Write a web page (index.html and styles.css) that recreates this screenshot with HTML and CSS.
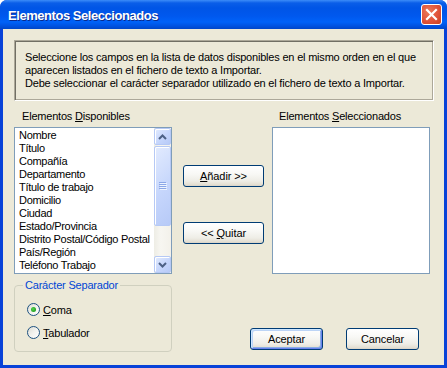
FILE: index.html
```html
<!DOCTYPE html>
<html lang="es">
<head>
<meta charset="utf-8">
<title>Elementos Seleccionados</title>
<link rel="stylesheet" href="styles.css">
</head>
<body>
<div class="window">
  <div class="titlebar">
    <span class="title">Elementos Seleccionados</span>
    <span class="close" aria-label="Cerrar">
      <svg width="21" height="21" viewBox="0 0 21 21"><path d="M6 6 L15 15 M15 6 L6 15" stroke="#fff" stroke-width="2.2" stroke-linecap="square"/></svg>
    </span>
  </div>
  <div class="client">
    <div class="info">
      <p>Seleccione los campos en la lista de datos disponibles en el mismo orden en el que aparecen listados en el fichero de texto a Importar.</p>
      <p>Debe seleccionar el carácter separador utilizado en el fichero de texto a Importar.</p>
    </div>
    <div class="main">
      <div class="leftcol">
        <div class="label">Elementos <u>D</u>isponibles</div>
        <div class="listbox">
          <ul class="items">
            <li>Nombre</li>
            <li>Título</li>
            <li>Compañía</li>
            <li>Departamento</li>
            <li>Título de trabajo</li>
            <li>Domicilio</li>
            <li>Ciudad</li>
            <li>Estado/Provincia</li>
            <li>Distrito Postal/Código Postal</li>
            <li>País/Región</li>
            <li>Teléfono Trabajo</li>
          </ul>
          <div class="scrollbar">
            <div class="sbtn">
              <svg width="9" height="6" viewBox="0 0 9 6"><path d="M1 5 L4.5 1.5 L8 5" fill="none" stroke="#4d6185" stroke-width="2"/></svg>
            </div>
            <div class="thumb">
              <svg width="8" height="8" viewBox="0 0 8 8"><path d="M0 0.5H7M0 2.5H7M0 4.5H7M0 6.5H7" stroke="#8ca7e7" stroke-width="1"/><path d="M1 1.5H8M1 3.5H8M1 5.5H8M1 7.5H8" stroke="#eef4fe" stroke-width="1"/></svg>
            </div>
            <div class="track"></div>
            <div class="sbtn">
              <svg width="9" height="6" viewBox="0 0 9 6"><path d="M1 1 L4.5 4.5 L8 1" fill="none" stroke="#4d6185" stroke-width="2"/></svg>
            </div>
          </div>
        </div>
        <fieldset class="group">
          <legend>Carácter Separador</legend>
          <label class="radio"><span class="dot checked"></span><span><u>C</u>oma</span></label>
          <label class="radio"><span class="dot"></span><span><u>T</u>abulador</span></label>
        </fieldset>
      </div>
      <div class="rightpart">
        <div class="toprow">
          <div class="movebtns">
            <button class="btn move"><u>A</u>ñadir &gt;&gt;</button>
            <button class="btn move">&lt;&lt; <u>Q</u>uitar</button>
          </div>
          <div class="selcol">
            <div class="label sel">Elementos <u>S</u>eleccionados</div>
            <div class="listbox empty"></div>
          </div>
        </div>
        <div class="dlgbtns">
          <button class="btn dlg default">Aceptar</button>
          <button class="btn dlg">Cancelar</button>
        </div>
      </div>
    </div>
  </div>
</div>
</body>
</html>
```

FILE: styles.css
```css
* { box-sizing: border-box; }
html, body { margin: 0; padding: 0; background: #ffffff; }
body { font-family: "Liberation Sans", Arial, sans-serif; font-size: 11px; letter-spacing: -0.2px; color: #000; }

.window {
  width: 447px;
  height: 368px;
  display: flex;
  flex-direction: column;
  background: #0842d8;
  border-radius: 7px 7px 0 0;
  overflow: hidden;
}

.titlebar {
  height: 29px;
  flex: none;
  display: flex;
  align-items: center;
  justify-content: space-between;
  padding: 0 5px 0 8px;
  background: linear-gradient(#3c8cf8 0, #0a5ee8 3px, #0055e6 8px, #0058ee 16px, #0062f8 22px, #0052e0 26px, #0046c8 29px);
}
.title {
  color: #fff;
  font-family: "Liberation Sans", Arial, sans-serif;
  font-weight: bold;
  font-size: 13px;
  letter-spacing: -0.45px;
  text-shadow: 1px 1px 0 #0a2a8c;
  padding-top: 1px;
}
.close {
  width: 21px;
  height: 21px;
  display: flex;
  border: 1px solid #fff;
  border-radius: 3px;
  background: radial-gradient(circle at 35% 35%, #ec7a5a 0, #e0533a 55%, #c8401f 100%);
  align-items: center;
  justify-content: center;
}
.close svg { display: block; margin: -1px; }

.client {
  flex: 1;
  margin: 0 3px 3px 3px;
  background: #ece9d8;
  padding: 11px 10px 0 11px;
}

.info {
  height: 61px;
  border: 1px solid;
  border-color: #aca899 #ffffff #ffffff #aca899;
  box-shadow: inset 1px 1px 0 #716f64, inset -1px -1px 0 #aca899;
  padding: 10px 8px 0 10px;
  line-height: 13px;
}
.info p { margin: 0; }

.main {
  display: flex;
  margin-top: 9px;
}
.leftcol {
  width: 158px;
  flex: none;
  display: flex;
  flex-direction: column;
}
.label {
  height: 13px;
  line-height: 13px;
  padding-left: 8px;
  margin-bottom: 4px;
}
.label.sel { padding-left: 7px; }

.listbox {
  height: 147px;
  border: 1px solid #7f9db9;
  background: #fff;
  display: flex;
}
.items {
  list-style: none;
  margin: 0;
  padding: 1px 0 0 4px;
  flex: 1;
  overflow: hidden;
  white-space: nowrap;
  font-size: 11px;
  letter-spacing: -0.3px;
}
.items li { height: 13px; line-height: 13px; }

.scrollbar {
  width: 17px;
  flex: none;
  display: flex;
  flex-direction: column;
  background: linear-gradient(90deg, #eeede5, #f7f6f1 40%, #f3f1ea);
}
.sbtn, .thumb {
  border: 1px solid #b6c9f5;
  border-radius: 2px;
  background: linear-gradient(135deg, #e2ebfe 0, #c6d6fc 55%, #b7caf7 100%);
  box-shadow: inset 1px 1px 0 #ffffff;
  display: flex;
  align-items: center;
  justify-content: center;
}
.sbtn { height: 17px; flex: none; }
.thumb { height: 80px; flex: none; margin-top: 1px; }
.thumb svg, .sbtn svg { display: block; }
.track { flex: 1; }

.group {
  margin: 5px 0 0 0;
  padding: 11px 0 0 12px;
  height: 73px;
  border: 1px solid #d0d0bf;
  border-radius: 4px;
  min-width: 0;
}
.group legend {
  color: #0046d5;
  padding: 0 2px;
  margin-left: -4px;
  line-height: 13px;
}
.radio {
  display: flex;
  align-items: center;
  gap: 3px;
  height: 13px;
  margin-bottom: 10px;
}
.dot {
  width: 13px;
  height: 13px;
  border-radius: 50%;
  border: 1px solid #1c5180;
  background: linear-gradient(135deg, #dcdcd4 0, #f2f2ee 50%, #ffffff 100%);
  display: flex;
  align-items: center;
  justify-content: center;
  flex: none;
}
.dot.checked::after {
  content: "";
  width: 5px;
  height: 5px;
  border-radius: 50%;
  background: radial-gradient(circle at 40% 40%, #55d34f 0, #21a121 70%);
}

.rightpart {
  flex: 1;
  display: flex;
  flex-direction: column;
}
.toprow { display: flex; }
.movebtns {
  width: 81px;
  margin-left: 11px;
  margin-right: 8px;
  padding-top: 55px;
  display: flex;
  flex-direction: column;
  gap: 35px;
}
.selcol { width: 158px; }

.btn {
  font-family: "Liberation Sans", Arial, sans-serif;
  font-size: 11px;
  letter-spacing: -0.1px;
  color: #000;
  height: 22px;
  border: 1px solid #003c74;
  border-radius: 3px;
  background: linear-gradient(#ffffff 0, #f8f8f5 40%, #eeede6 75%, #e2ddd0 95%, #d6d0c5 100%);
  padding: 0;
}
.btn.move { width: 81px; }
.dlgbtns {
  display: flex;
  justify-content: flex-end;
  gap: 23px;
  margin-top: 54px;
  padding-right: 15px;
}
.btn.dlg { width: 73px; }
.btn.default {
  box-shadow: inset 1px 1px 0 #cee7ff, inset -1px -1px 0 #6982ee, inset 2px 2px 0 #bcd4f6, inset -2px -2px 0 #89ade4;
}
```
